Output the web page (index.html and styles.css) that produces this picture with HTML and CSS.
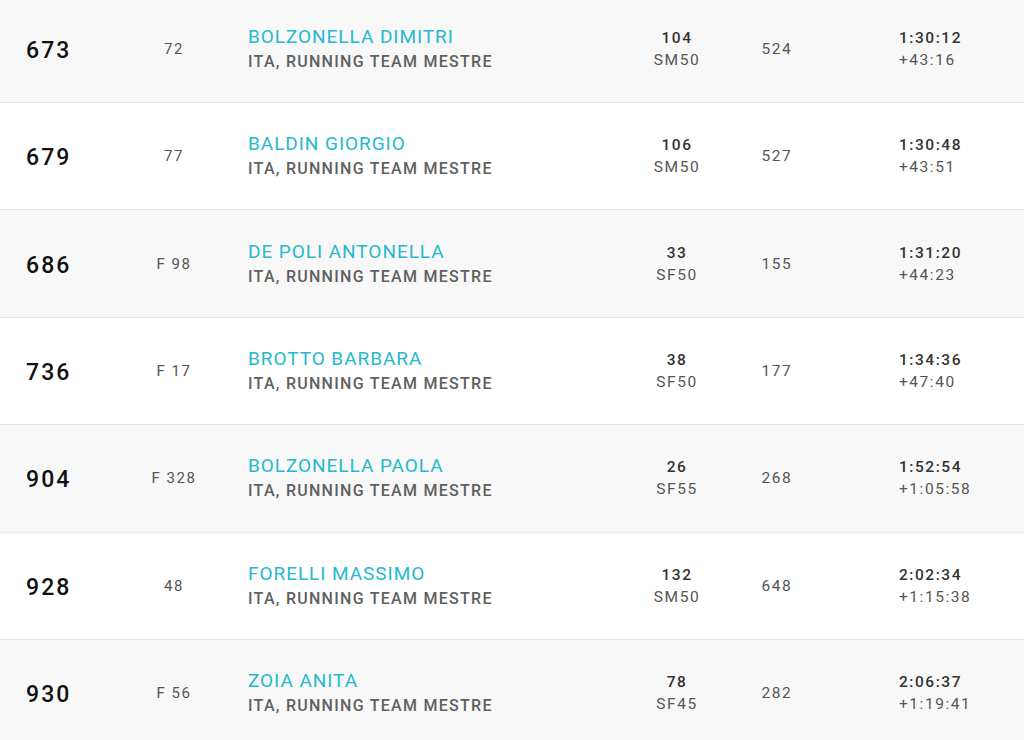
FILE: index.html
```html
<!DOCTYPE html>
<html>
<head>
<meta charset="utf-8">
<link rel="stylesheet" href="styles.css">
</head>
<body>
<div class="list">
  <div class="row odd">
    <div class="rank">673</div><div class="pos">72</div>
    <div class="who"><div class="name">BOLZONELLA DIMITRI</div><div class="team">ITA, RUNNING TEAM MESTRE</div></div>
    <div class="cat"><div class="top">104</div><div class="sub">SM50</div></div>
    <div class="cnt">524</div>
    <div class="time"><div class="top">1:30:12</div><div class="sub">+43:16</div></div>
  </div>
  <div class="row">
    <div class="rank">679</div><div class="pos">77</div>
    <div class="who"><div class="name">BALDIN GIORGIO</div><div class="team">ITA, RUNNING TEAM MESTRE</div></div>
    <div class="cat"><div class="top">106</div><div class="sub">SM50</div></div>
    <div class="cnt">527</div>
    <div class="time"><div class="top">1:30:48</div><div class="sub">+43:51</div></div>
  </div>
  <div class="row odd">
    <div class="rank">686</div><div class="pos">F 98</div>
    <div class="who"><div class="name">DE POLI ANTONELLA</div><div class="team">ITA, RUNNING TEAM MESTRE</div></div>
    <div class="cat"><div class="top">33</div><div class="sub">SF50</div></div>
    <div class="cnt">155</div>
    <div class="time"><div class="top">1:31:20</div><div class="sub">+44:23</div></div>
  </div>
  <div class="row">
    <div class="rank">736</div><div class="pos">F 17</div>
    <div class="who"><div class="name">BROTTO BARBARA</div><div class="team">ITA, RUNNING TEAM MESTRE</div></div>
    <div class="cat"><div class="top">38</div><div class="sub">SF50</div></div>
    <div class="cnt">177</div>
    <div class="time"><div class="top">1:34:36</div><div class="sub">+47:40</div></div>
  </div>
  <div class="row odd">
    <div class="rank">904</div><div class="pos">F 328</div>
    <div class="who"><div class="name">BOLZONELLA PAOLA</div><div class="team">ITA, RUNNING TEAM MESTRE</div></div>
    <div class="cat"><div class="top">26</div><div class="sub">SF55</div></div>
    <div class="cnt">268</div>
    <div class="time"><div class="top">1:52:54</div><div class="sub">+1:05:58</div></div>
  </div>
  <div class="row">
    <div class="rank">928</div><div class="pos">48</div>
    <div class="who"><div class="name">FORELLI MASSIMO</div><div class="team">ITA, RUNNING TEAM MESTRE</div></div>
    <div class="cat"><div class="top">132</div><div class="sub">SM50</div></div>
    <div class="cnt">648</div>
    <div class="time"><div class="top">2:02:34</div><div class="sub">+1:15:38</div></div>
  </div>
  <div class="row odd">
    <div class="rank">930</div><div class="pos">F 56</div>
    <div class="who"><div class="name">ZOIA ANITA</div><div class="team">ITA, RUNNING TEAM MESTRE</div></div>
    <div class="cat"><div class="top">78</div><div class="sub">SF45</div></div>
    <div class="cnt">282</div>
    <div class="time"><div class="top">2:06:37</div><div class="sub">+1:19:41</div></div>
  </div>
</div>
</body>
</html>
```

FILE: styles.css
```css
html, body {
  margin: 0;
  padding: 0;
  background: #fff;
  overflow: hidden;
}
body {
  font-family: Roboto, "Liberation Sans", sans-serif;
  width: 1024px;
  height: 740px;
}
.list {
  margin-top: -4.4px;
}
.row {
  display: grid;
  grid-template-columns: 120px 108px 399px 100px 100px 1fr;
  align-items: center;
  height: 106.4px;
  border-bottom: 1px solid #e6e6e6;
  background: #fff;
}
.row.odd {
  background: #f8f8f8;
}
.rank {
  padding-left: 26px;
  padding-top: 3px;
  font-size: 23px;
  font-weight: 500;
  color: #111;
  letter-spacing: 0.09em;
}
.pos {
  text-align: center;
  font-size: 15px;
  color: #555;
  letter-spacing: 0.1em;
}
.who {
  padding-left: 20px;
}
.name {
  font-size: 19px;
  color: #26b8cf;
  letter-spacing: 0.05em;
  line-height: 25px;
}
.team {
  font-size: 16px;
  font-weight: 500;
  color: #606060;
  letter-spacing: 0.08em;
  line-height: 25px;
}
.cat {
  text-align: center;
}
.top {
  font-size: 15.5px;
  font-weight: 500;
  color: #333;
  letter-spacing: 0.1em;
  line-height: 22px;
}
.sub {
  font-size: 15.5px;
  color: #555;
  letter-spacing: 0.1em;
  line-height: 22px;
}
.cnt {
  text-align: center;
  font-size: 15.5px;
  color: #555;
  letter-spacing: 0.1em;
}
.time {
  padding-left: 72px;
}
```
